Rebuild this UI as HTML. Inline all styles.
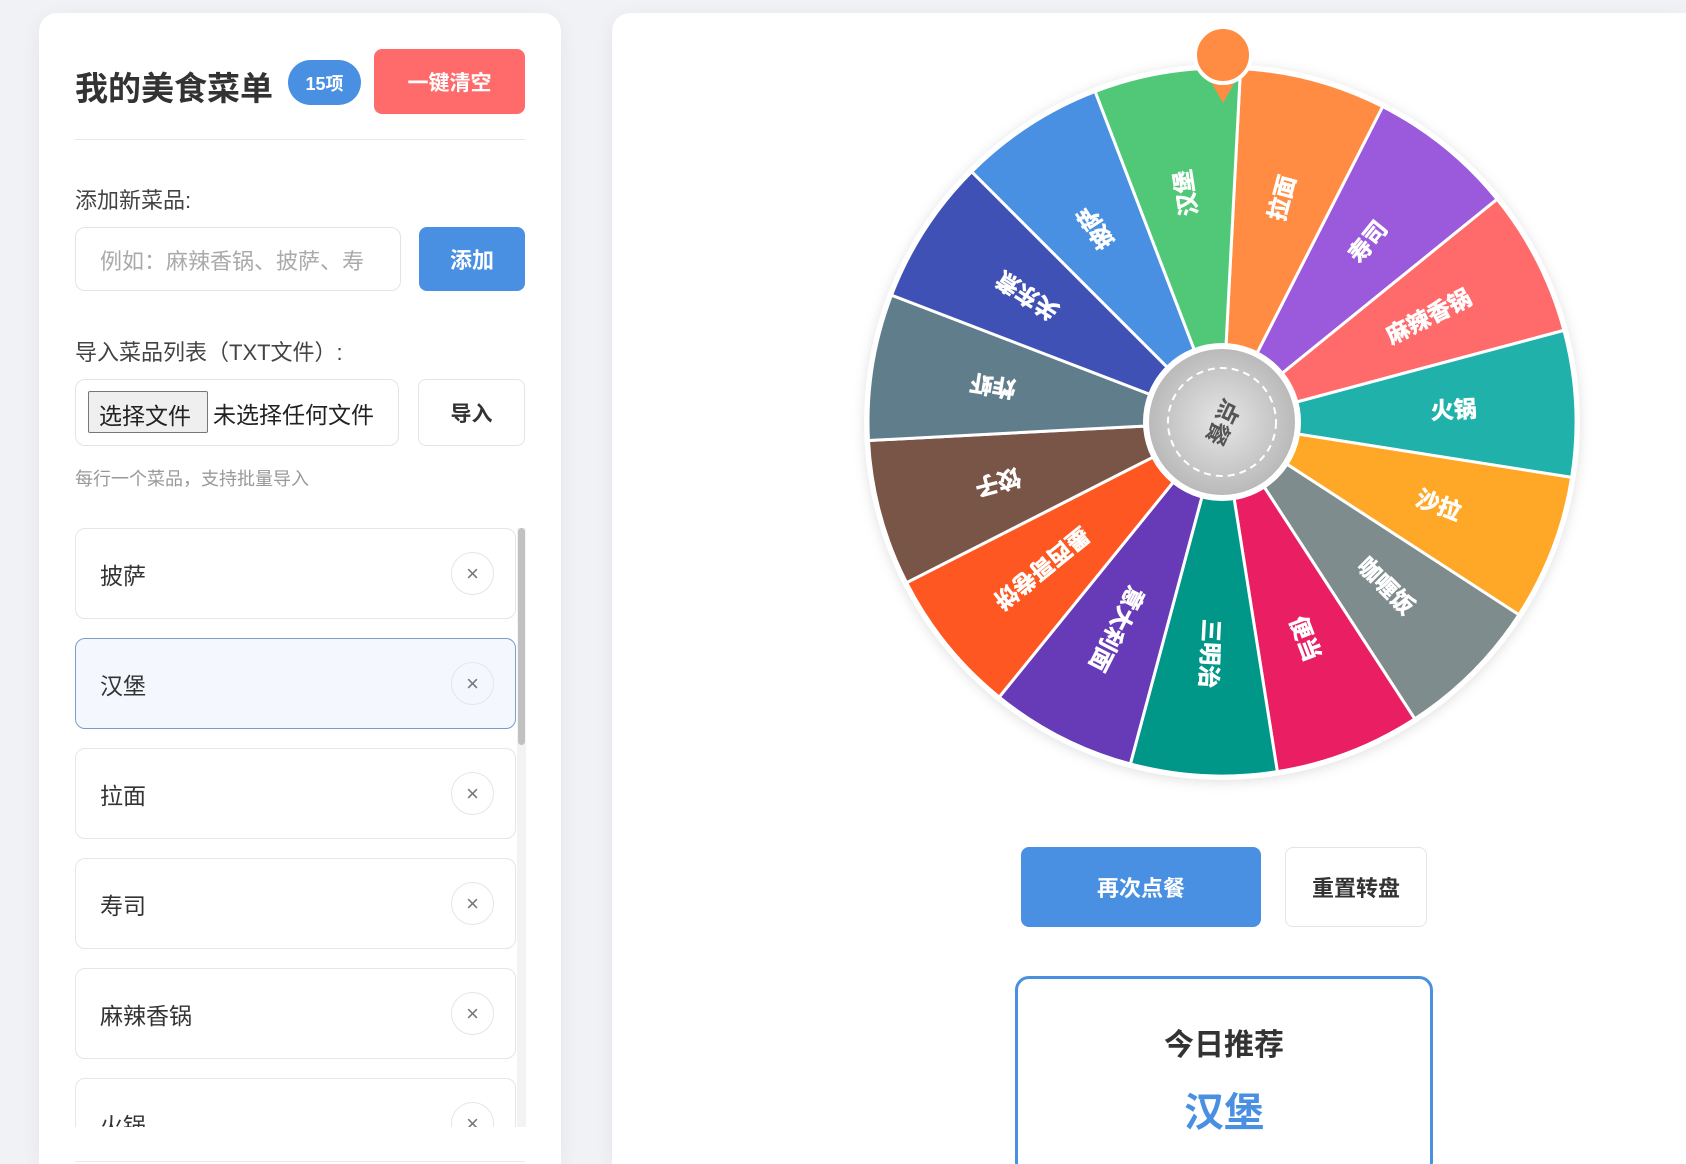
<!DOCTYPE html>
<html style="overflow:hidden;height:1164px"><head><meta charset="utf-8">
<style>
*{box-sizing:border-box;margin:0;padding:0}
body{width:1686px;height:1164px;overflow:hidden;background:#f0f2f6;font-family:"Liberation Sans","Noto Sans CJK SC",sans-serif;position:relative;color:#333}
.card{position:absolute;background:#fff;border-radius:18px 18px 0 0;box-shadow:0 4px 20px rgba(0,0,0,0.06)}
.abs{position:absolute}
.btn{position:absolute;display:flex;align-items:center;justify-content:center;border-radius:8px;font-weight:bold}
.item{position:absolute;left:75px;width:441px;height:91px;border:1px solid #e3e6ea;border-radius:10px;background:#fff;font-size:23px;display:flex;align-items:center;padding-left:24px;color:#333}
.item .x{position:absolute;left:375px;top:23px;width:43px;height:43px;border:1px solid #e3e6ea;border-radius:50%;display:flex;align-items:center;justify-content:center;color:#777;font-size:22px}
</style></head><body>
<div class="card" style="left:39px;top:13px;width:522px;height:1151px"></div>
<div class="abs" style="left:75px;top:62px;font-size:33px;font-weight:bold;color:#333">我的美食菜单</div>
<div class="btn" style="left:288px;top:60px;width:73px;height:45px;border-radius:23px;background:#4A90E2;color:#fff;font-size:18px">15项</div>
<div class="btn" style="left:374px;top:49px;width:151px;height:65px;background:#FF6B6B;color:#fff;font-size:21px">一键清空</div>
<div class="abs" style="left:75px;top:139px;width:450px;height:1px;background:#e6e8eb"></div>
<div class="abs" style="left:75px;top:183px;font-size:22px;color:#444">添加新菜品:</div>
<div class="abs" style="left:75px;top:227px;width:326px;height:64px;border:1px solid #e1e4e8;border-radius:10px;font-size:22px;color:#aaa;padding:16px 0 0 24px;white-space:nowrap;overflow:hidden">例如：麻辣香锅、披萨、寿</div>
<div class="btn" style="left:419px;top:227px;width:106px;height:64px;background:#4A90E2;color:#fff;font-size:22px">添加</div>
<div class="abs" style="left:75px;top:335px;font-size:22px;color:#444">导入菜品列表（TXT文件）:</div>
<div class="abs" style="left:75px;top:379px;width:324px;height:67px;border:1px solid #e1e4e8;border-radius:10px"></div>
<div class="abs" style="left:88px;top:391px;width:120px;height:42px;border:1px solid #777;background:#efefef;border-radius:2px;font-size:23px;padding:5px 0 0 10px;color:#222">选择文件</div>
<div class="abs" style="left:213px;top:396px;font-size:23px;color:#222">未选择任何文件</div>
<div class="btn" style="left:418px;top:379px;width:107px;height:67px;border:1px solid #e1e4e8;background:#fff;color:#333;font-size:21px">导入</div>
<div class="abs" style="left:75px;top:465px;font-size:18px;color:#999">每行一个菜品，支持批量导入</div>
<div class="abs" style="left:75px;top:528px;width:455px;height:599px;overflow:hidden">
<div class="item" style="left:0;top:0">披萨<div class="x">×</div></div>
<div class="item" style="left:0;top:110px;background:#f4f8fe;border-color:#7a9fc7">汉堡<div class="x">×</div></div>
<div class="item" style="left:0;top:220px">拉面<div class="x">×</div></div>
<div class="item" style="left:0;top:330px">寿司<div class="x">×</div></div>
<div class="item" style="left:0;top:440px">麻辣香锅<div class="x">×</div></div>
<div class="item" style="left:0;top:550px">火锅<div class="x">×</div></div>
<div class="abs" style="left:442px;top:0;width:9px;height:599px;background:#f3f3f3"></div>
<div class="abs" style="left:443px;top:0;width:7px;height:217px;background:#c1c1c1;border-radius:4px"></div>
</div>
<div class="abs" style="left:75px;top:1161px;width:450px;height:1px;background:#e6e8eb"></div>

<div class="card" style="left:612px;top:13px;width:1074px;height:1151px;border-radius:18px 0 0 0"></div>
<svg class="abs" style="left:0;top:0" width="1686" height="1164" id="w"></svg>
<div class="btn" style="left:1021px;top:847px;width:240px;height:80px;background:#4A90E2;color:#fff;font-size:22px">再次点餐</div>
<div class="btn" style="left:1285px;top:847px;width:142px;height:80px;border:1px solid #e1e4e8;background:#fff;color:#333;font-size:22px">重置转盘</div>
<div class="abs" style="left:1015px;top:976px;width:418px;height:200px;border:3px solid #4A90E2;border-radius:14px;background:#fff"></div>
<div class="abs" style="left:1015px;top:1020px;width:418px;text-align:center;font-size:30px;font-weight:bold;color:#333">今日推荐</div>
<div class="abs" style="left:1015px;top:1080px;width:418px;text-align:center;font-size:40px;font-weight:bold;color:#4A90E2">汉堡</div>
<script>
var n=["拉面","寿司","麻辣香锅","火锅","沙拉","咖喱饭","便当","三明治","意大利面","墨西哥卷饼","饺子","炸虾","关东煮","披萨","汉堡"];
var c=["#FF8C42","#9B59DB","#FF6B6B","#20B2AA","#FFA726","#7F8C8D","#E91E63","#009688","#673AB7","#FF5722","#795548","#607D8B","#3F51B5","#4A90E2","#50C878"];
var cx=1222,cy=422,R=354,s='<circle cx="'+cx+'" cy="'+cy+'" r="'+(R+4)+'" fill="#fff" style="filter:drop-shadow(0 2px 6px rgba(0,0,0,.12))"/>';
function p(a,r){var t=(a-90)*Math.PI/180;return [cx+r*Math.cos(t),cy+r*Math.sin(t)];}
for(var i=0;i<15;i++){var a0=3+24*i,a1=a0+24,A=p(a0,R),B=p(a1,R);
s+='<path d="M'+cx+' '+cy+'L'+A[0]+' '+A[1]+'A'+R+' '+R+' 0 0 1 '+B[0]+' '+B[1]+'Z" fill="'+c[i]+'" stroke="#fff" stroke-width="3"/>';
var m=a0+12-90;s+='<g transform="translate('+cx+' '+cy+') rotate('+m+')"><text x="232" y="0" text-anchor="middle" dominant-baseline="central" fill="#fff" stroke="#fff" stroke-width="0.6" font-size="23" font-weight="bold" font-family="Liberation Sans,Noto Sans CJK SC,sans-serif">'+n[i]+'</text></g>';}
s+='<defs><radialGradient id="g"><stop offset="0" stop-color="#e6e6e6"/><stop offset="1" stop-color="#b8b8b8"/></radialGradient></defs>';
s+='<circle cx="'+cx+'" cy="'+cy+'" r="76" fill="url(#g)" stroke="#fff" stroke-width="6"/>';
s+='<circle cx="'+cx+'" cy="'+cy+'" r="54" fill="none" stroke="#fff" stroke-width="2" stroke-dasharray="7 5"/>';
s+='<text transform="translate('+cx+' '+cy+') rotate(115)" text-anchor="middle" dominant-baseline="central" fill="#555" font-size="24" font-weight="bold" font-family="Liberation Sans,Noto Sans CJK SC,sans-serif">点餐</text>';
s+='<path d="M1209 78 L1237 78 L1223 103 Z" fill="#FF8C42"/><circle cx="1223" cy="55" r="28" fill="#FF8C42" stroke="#fff" stroke-width="4"/>';
document.getElementById('w').innerHTML=s;
</script>
</body></html>
